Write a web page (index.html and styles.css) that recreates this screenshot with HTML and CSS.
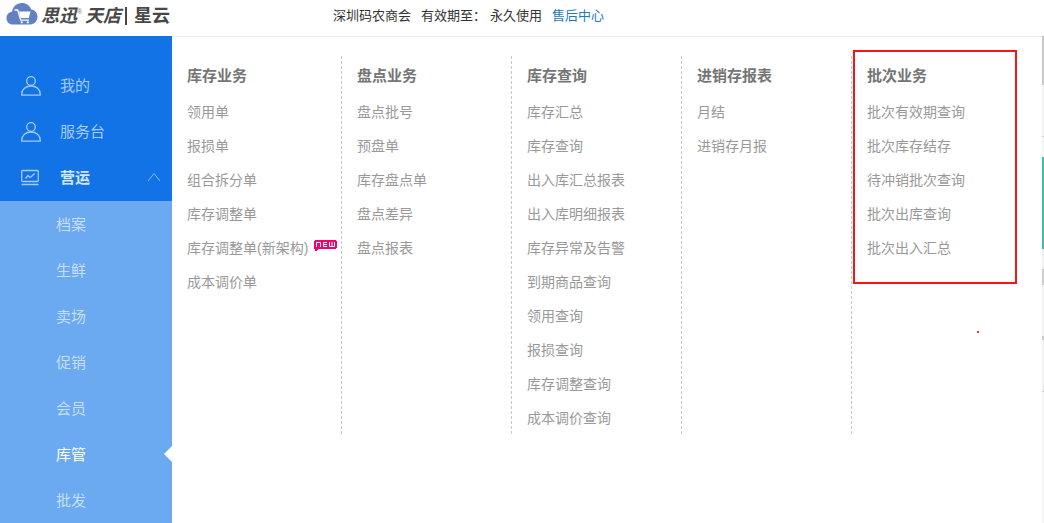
FILE: index.html
```html
<!DOCTYPE html>
<html lang="zh-CN">
<head>
<meta charset="utf-8">
<title>思迅天店 | 星云</title>
<link rel="stylesheet" href="styles.css">
</head>
<body>
<header class="topbar">
  <div class="brand">
    <svg class="brand-cloud" width="32" height="24" viewBox="0 0 32 24" aria-hidden="true">
      <path fill="#6381c2" d="M7 22.5C3 22.5.5 19.700.5 16.200c0-3.500 2.300-5.900 5.500-6.400C6.700 4.600 10.700 1 15.800 1c4.700 0 8 2.600 9.400 6.500 4 .5 6.300 3.600 6.300 7.300 0 4.300-3.100 7.700-7.500 7.700z"/>
      <path fill="#fff" d="M13 9.500h11.500L22.800 16H14.600z"/>
      <path fill="none" stroke="#fff" stroke-width="1.300" d="M8.500 8h3.200l3 10.200h8.300"/>
      <circle cx="15.800" cy="20.300" r="1.100" fill="#fff"/><circle cx="21.800" cy="20.300" r="1.100" fill="#fff"/>
    </svg>
    <span class="brand-name">思迅</span><sup class="brand-mark">®</sup><span class="brand-name">天店</span>
    <span class="brand-rule"></span>
    <span class="brand-product">星云</span>
  </div>
  <div class="account">
    <span>深圳码农商会</span>
    <span class="account-term"><span>有效期至：</span><span>永久使用</span></span>
    <a href="#support">售后中心</a>
  </div>
</header>
<div class="shell">
  <nav class="sidebar">
    <ul class="main-menu">
      <li><a href="#mine"><svg class="menu-icon" width="20" height="20" viewBox="0 0 20 20" aria-hidden="true"><circle cx="10" cy="5" r="4.300"/><path d="M.8 19.200V18c0-4.500 4-8 9.200-8s9.200 3.500 9.200 8v1.200z"/></svg>我的</a></li>
      <li><a href="#desk"><svg class="menu-icon" width="20" height="20" viewBox="0 0 20 20" aria-hidden="true"><circle cx="10" cy="5" r="4.300"/><path d="M.8 19.200V18c0-4.500 4-8 9.200-8s9.200 3.500 9.200 8v1.200z"/></svg>服务台</a></li>
      <li><a class="open" href="#operate"><svg class="menu-icon" width="20" height="20" viewBox="0 0 20 20" aria-hidden="true"><rect x=".7" y="2.500" width="16.600" height="11" rx="1"/><path d="M4.500 10.500l2.500-3 2 2 1.500-1 3-3M.5 16.500h17"/></svg>营运<svg class="chevron" width="14" height="10" viewBox="0 0 14 10" aria-hidden="true"><path d="M1 9l6-7.500L13 9"/></svg></a></li>
    </ul>
    <ul class="sub-menu">
      <li><a href="#archive">档案</a></li>
      <li><a href="#fresh">生鲜</a></li>
      <li><a href="#store">卖场</a></li>
      <li><a href="#promo">促销</a></li>
      <li><a href="#member">会员</a></li>
      <li><a class="current" href="#stock">库管</a></li>
      <li><a href="#wholesale">批发</a></li>
    </ul>
  </nav>
  <main class="panel">
    <div class="columns">
      <section class="column">
        <h2>库存业务</h2>
        <ul>
          <li><a href="#">领用单</a></li>
          <li><a href="#">报损单</a></li>
          <li><a href="#">组合拆分单</a></li>
          <li><a href="#">库存调整单</a></li>
          <li><a href="#">库存调整单(新架构)</a><svg class="new-tag" width="23" height="12" viewBox="0 0 23 12" role="img" aria-label="新"><path fill="#f5006e" d="M1 0h21v1h1v7h-1v1H4v1H3v1H1V9H0V1h1z"/><path fill="none" stroke="#fff" d="M2.500 7V2.500h4V7M13 2.500H9.500v4H13M9.500 4.500H13M15.500 2v4.500h5V2M18 2v4.500"/></svg></li>
          <li><a href="#">成本调价单</a></li>
        </ul>
      </section>
      <section class="column">
        <h2>盘点业务</h2>
        <ul>
          <li><a href="#">盘点批号</a></li>
          <li><a href="#">预盘单</a></li>
          <li><a href="#">库存盘点单</a></li>
          <li><a href="#">盘点差异</a></li>
          <li><a href="#">盘点报表</a></li>
        </ul>
      </section>
      <section class="column">
        <h2>库存查询</h2>
        <ul>
          <li><a href="#">库存汇总</a></li>
          <li><a href="#">库存查询</a></li>
          <li><a href="#">出入库汇总报表</a></li>
          <li><a href="#">出入库明细报表</a></li>
          <li><a href="#">库存异常及告警</a></li>
          <li><a href="#">到期商品查询</a></li>
          <li><a href="#">领用查询</a></li>
          <li><a href="#">报损查询</a></li>
          <li><a href="#">库存调整查询</a></li>
          <li><a href="#">成本调价查询</a></li>
        </ul>
      </section>
      <section class="column">
        <h2>进销存报表</h2>
        <ul>
          <li><a href="#">月结</a></li>
          <li><a href="#">进销存月报</a></li>
        </ul>
      </section>
      <section class="column">
        <h2>批次业务</h2>
        <ul>
          <li><a href="#">批次有效期查询</a></li>
          <li><a href="#">批次库存结存</a></li>
          <li><a href="#">待冲销批次查询</a></li>
          <li><a href="#">批次出库查询</a></li>
          <li><a href="#">批次出入汇总</a></li>
        </ul>
        <span class="highlight"></span>
        <span class="pen-dot"></span>
      </section>
    </div>
  </main>
  <div class="page-edge"></div>
</div>
</body>
</html>
```
FILE: styles.css
```css
* { box-sizing: border-box; }

body {
  margin: 0;
  min-height: 100vh;
  display: flex;
  flex-direction: column;
  background: #fff;
  color: #333;
  font: 14px/20px "Liberation Sans", "Noto Sans CJK SC", sans-serif;
}

ul { margin: 0; padding: 0; list-style: none; }
a { color: inherit; text-decoration: none; }

.topbar {
  display: flex;
  align-items: center;
  height: 36px;
  padding: 0 6px 5px;
}

.brand { display: flex; align-items: center; width: 327px; color: #484848; }
.brand-cloud { margin: 0 3px 4px 0; }
.brand-name { font-size: 18px; font-weight: 700; font-style: italic; }
.brand-mark { width: 8px; padding-bottom: 8px; font-size: 7px; line-height: 8px; color: #777; }
.brand-rule { width: 2px; height: 18px; margin: 0 7px 0 4px; background: #484848; }
.brand-product { font-size: 18px; font-weight: 700; }

.account { display: flex; gap: 10px; font-size: 13px; }
.account-term { display: flex; gap: 4px; }
.account a { color: #1f7ab5; }

.shell { display: flex; flex: 1; }

.sidebar {
  display: flex;
  flex-direction: column;
  width: 172px;
  background: #1273e6;
  font-size: 15px;
}

.main-menu { padding-top: 27px; color: #a6cbf6; }
.main-menu a { display: flex; align-items: center; height: 46px; padding: 0 11px 0 21px; }
.main-menu .open { color: #d5e6fb; font-weight: 700; }
.menu-icon { margin-right: 19px; fill: none; stroke: #a6cbf6; stroke-width: 1.3; }
.chevron { margin-left: auto; margin-bottom: 2px; fill: none; stroke: #8bbbf3; }

.sub-menu { flex: 1; padding-top: 1px; background: #6ba9f0; color: #c6dff9; }
.sub-menu a { position: relative; display: flex; align-items: center; height: 46px; padding-left: 56px; }
.sub-menu .current { color: #fff; }
.sub-menu .current::after {
  content: "";
  position: absolute;
  right: 0;
  top: 14px;
  border: 8px solid transparent;
  border-left: 0;
  border-right-color: #fff;
}

.panel { flex: 1; padding-top: 20px; box-shadow: inset 0 1px 1px #eaeaea; }
.columns { display: flex; }
.column { position: relative; width: 170px; padding-left: 15px; }
.column:not(:last-child) {
  background: repeating-linear-gradient(#c8c8c8 0 3px, transparent 3px 5px) right / 1px 100% no-repeat;
}
.column h2 { margin: 0; color: #757575; font-size: 15px; line-height: 39px; }
.column li { display: flex; align-items: center; gap: 6px; height: 34px; color: #999; white-space: nowrap; }
.new-tag { margin-bottom: 4px; }

.highlight { position: absolute; left: 1px; top: -6px; width: 164px; height: 234px; border: 2px solid #f81414; }
.pen-dot { position: absolute; left: 125px; top: 275px; width: 2px; height: 2px; background: #f33; }

.page-edge {
  width: 2px;
  background: linear-gradient(
    #c9c9c9 0 49px, #f2f2f2 49px 100px, #ccc 100px 101px, #f4f4f4 101px 121px,
    #3fbfa8 121px 213px, #f2f2f2 213px 233px, #ccc 233px 249px, #f2f2f2 249px 300px,
    #ccc 300px 304px, #f2f2f2 304px 355px, #ccc 355px 356px, #f4f4f4 356px);
}
```
